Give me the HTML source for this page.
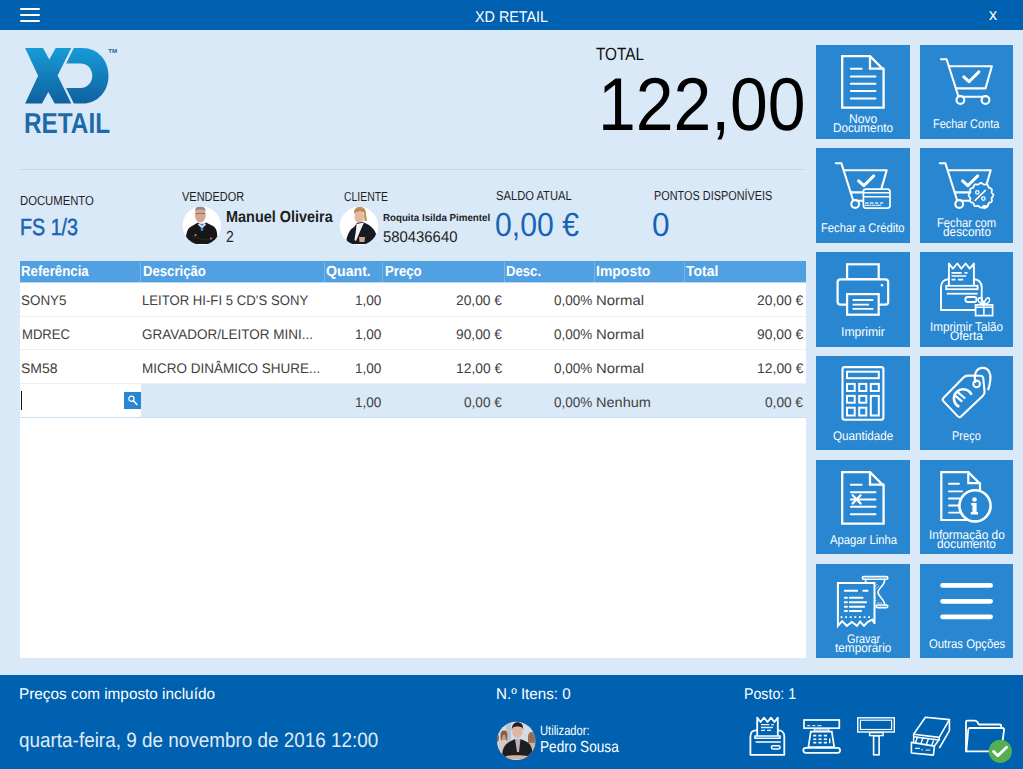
<!DOCTYPE html>
<html><head><meta charset="utf-8">
<style>
*{margin:0;padding:0;box-sizing:border-box}
html,body{width:1023px;height:769px;overflow:hidden;background:#DAE9F7;font-family:"Liberation Sans",sans-serif;color:#1b1b1b;position:relative}
.a{position:absolute}
.t{position:absolute;white-space:nowrap;line-height:1;transform-origin:0 0;text-rendering:geometricPrecision}
.btn{position:absolute;width:94px;height:94px;background:#2887D0}
.btn svg{position:absolute;left:0;top:0;overflow:visible}
.ic{fill:none;stroke:#fff;stroke-width:2.1;stroke-linecap:round;stroke-linejoin:round}
</style></head><body>
<div class="a" style="left:0;top:0;width:1023px;height:30px;background:#0061B0"></div>
<div class="a" style="left:20px;top:8px;width:20px;height:2px;background:#fff;border-radius:1px"></div>
<div class="a" style="left:20px;top:14px;width:20px;height:2px;background:#fff;border-radius:1px"></div>
<div class="a" style="left:20px;top:20px;width:20px;height:2px;background:#fff;border-radius:1px"></div>

<svg class="a" style="left:0;top:0" width="130" height="110" viewBox="0 0 130 110">
<defs><linearGradient id="lg" x1="0" y1="48" x2="0" y2="104" gradientUnits="userSpaceOnUse"><stop offset="0" stop-color="#179BD7"/><stop offset="1" stop-color="#10609E"/></linearGradient></defs>
<path d="M25.1 48.1 L43 48.1 L49.3 59.6 L55.7 48.1 L71.3 48.1 L57.6 75.5 L71.3 103.6 L54.7 103.6 L48.3 91.9 L42 103.6 L25.1 103.6 L38.1 75.7 Z" fill="url(#lg)"/>
<path d="M73.8 48.1 H82.6 C97.5 48.1 108.5 60 108.5 75.8 C108.5 91.5 97.5 103.6 82.6 103.6 H73.8 L66.2 88 H80.6 C87.5 88 92.3 82.5 92.3 75.8 C92.3 69 87.5 63.5 80.6 63.5 H66.2 Z" fill="url(#lg)"/>
<text x="108.3" y="53" font-size="6.2" font-family="Liberation Sans" font-weight="bold" fill="#2A5F8E">TM</text>
</svg>

<div class="a" style="left:20px;top:169px;width:786px;height:1px;background:#C8D9E8"></div>

<div class="a" style="left:20px;top:282px;width:786px;height:376px;background:#fff"></div>
<div class="a" style="left:20px;top:261px;width:786px;height:21px;background:#51A0E2"></div>
<div class="a" style="left:140px;top:262px;width:1px;height:20px;background:#76B4EA"></div>
<div class="a" style="left:324px;top:262px;width:1px;height:20px;background:#76B4EA"></div>
<div class="a" style="left:382px;top:262px;width:1px;height:20px;background:#76B4EA"></div>
<div class="a" style="left:504px;top:262px;width:1px;height:20px;background:#76B4EA"></div>
<div class="a" style="left:594px;top:262px;width:1px;height:20px;background:#76B4EA"></div>
<div class="a" style="left:684px;top:262px;width:1px;height:20px;background:#76B4EA"></div>
<div class="a" style="left:20px;top:282px;width:786px;height:1px;background:#B5D7F3"></div>
<div class="a" style="left:20px;top:316px;width:786px;height:1px;background:#EDF0F3"></div>
<div class="a" style="left:20px;top:349px;width:786px;height:1px;background:#EDF0F3"></div>
<div class="a" style="left:20px;top:383px;width:786px;height:1px;background:#EDF0F3"></div>
<div class="a" style="left:141px;top:384px;width:665px;height:33px;background:#DAE9F7"></div>
<div class="a" style="left:20px;top:417px;width:786px;height:1px;background:#CADFF1"></div>
<div class="a" style="left:21px;top:391px;width:1px;height:19px;background:#111"></div>
<div class="a" style="left:124px;top:392px;width:17px;height:17px;background:#2887D0"></div>
<svg class="a" style="left:124px;top:392px" width="17" height="17" viewBox="0 0 17 17"><circle cx="7.4" cy="6.7" r="2.6" fill="none" stroke="#fff" stroke-width="1.2"/><path d="M9.2 8.6 L12.9 12.4" stroke="#fff" stroke-width="1.5" stroke-linecap="round"/></svg>

<div class="btn" style="left:816px;top:45px;width:94px;height:94px"></div><svg class="a" style="left:816px;top:44px;overflow:visible" width="94" height="94" viewBox="0 0 94 94"><path class="ic" d="M26.2 12.2 H54 L67.6 25.8 V63.6 H26.2 Z" style="stroke-width:2.3;stroke-linejoin:miter"/><path class="ic" d="M54 12.2 V24.6 H67.6" style="stroke-width:2.3;stroke-linejoin:miter"/><path class="ic" d="M34.8 24.8 H45.6 M34.8 32.4 H59.5 M34.8 39.7 H59.5 M34.8 47 H59.5 M34.8 54.4 H59.5" style="stroke-width:2"/></svg>
<div class="btn" style="left:920px;top:45px;width:93px;height:94px"></div><svg class="a" style="left:920px;top:44px;overflow:visible" width="94" height="94" viewBox="0 0 94 94"><path class="ic" d="M21 15.3 H26.6 L38.5 52.8 H64.1"/>
<path class="ic" d="M29 22.3 H71.9 L65.5 44.4 H36"/>
<path class="ic" d="M43.8 32.8 L49 37.7 L58.9 27.9" style="stroke-width:3"/>
<circle class="ic" cx="40.4" cy="56" r="3.9" style="fill:#2887D0"/>
<circle class="ic" cx="65.5" cy="56" r="3.9" style="fill:#2887D0"/></svg>
<div class="btn" style="left:816px;top:148px;width:94px;height:95px"></div><svg class="a" style="left:816px;top:148px;overflow:visible" width="94" height="94" viewBox="0 0 94 94"><g transform="translate(-1.2 0)"><path class="ic" d="M21 15.3 H26.6 L38.5 52.8 H64.1"/>
<path class="ic" d="M29 22.3 H71.9 L65.5 44.4 H36"/>
<path class="ic" d="M43.8 32.8 L49 37.7 L58.9 27.9" style="stroke-width:3"/>
<circle class="ic" cx="40.4" cy="56" r="3.9" style="fill:#2887D0"/>
<circle class="ic" cx="65.5" cy="56" r="3.9" style="fill:#2887D0"/></g><rect x="47.4" y="41.1" width="26.6" height="19" rx="2.5" fill="#2887D0" stroke="#fff" stroke-width="1.7"/>
<path d="M47.4 44.8 H74 M47.4 48.7 H74" stroke="#fff" stroke-width="1.5"/>
<path d="M49.2 55 H52.7 M54 55 H57.6 M59 55 H62.3 M64 55 H67.2" stroke="#fff" stroke-width="1.5" opacity="0.8"/>
<path d="M49.2 57.3 H54.8 M56.2 57.3 H58.7 M60 57.3 H64.8" stroke="#fff" stroke-width="1.1" stroke-linecap="round"/></svg>
<div class="btn" style="left:920px;top:148px;width:93px;height:95px"></div><svg class="a" style="left:920px;top:148px;overflow:visible" width="94" height="94" viewBox="0 0 94 94"><g transform="translate(-1.2 0)"><path class="ic" d="M21 15.3 H26.6 L38.5 52.8 H64.1"/>
<path class="ic" d="M29 22.3 H71.9 L65.5 44.4 H36"/>
<path class="ic" d="M43.8 32.8 L49 37.7 L58.9 27.9" style="stroke-width:3"/>
<circle class="ic" cx="40.4" cy="56" r="3.9" style="fill:#2887D0"/>
<circle class="ic" cx="65.5" cy="56" r="3.9" style="fill:#2887D0"/></g><path d="M73.35 47.30 L73.31 47.62 L73.21 47.94 L73.04 48.25 L72.84 48.54 L72.60 48.83 L72.36 49.10 L72.13 49.36 L71.93 49.62 L71.78 49.89 L71.67 50.16 L71.63 50.45 L71.63 50.75 L71.67 51.08 L71.74 51.42 L71.81 51.78 L71.87 52.14 L71.91 52.50 L71.89 52.85 L71.83 53.18 L71.70 53.47 L71.50 53.74 L71.25 53.96 L70.96 54.14 L70.63 54.30 L70.28 54.42 L69.94 54.54 L69.61 54.65 L69.30 54.78 L69.04 54.93 L68.81 55.11 L68.63 55.34 L68.48 55.60 L68.35 55.91 L68.24 56.24 L68.12 56.58 L68.00 56.93 L67.84 57.26 L67.66 57.55 L67.44 57.80 L67.17 58.00 L66.88 58.13 L66.55 58.19 L66.20 58.21 L65.84 58.17 L65.48 58.11 L65.12 58.04 L64.78 57.97 L64.45 57.93 L64.15 57.93 L63.86 57.97 L63.59 58.08 L63.32 58.23 L63.06 58.43 L62.80 58.66 L62.53 58.90 L62.24 59.14 L61.95 59.34 L61.64 59.51 L61.32 59.61 L61.00 59.65 L60.68 59.61 L60.36 59.51 L60.05 59.34 L59.76 59.14 L59.47 58.90 L59.20 58.66 L58.94 58.43 L58.68 58.23 L58.41 58.08 L58.14 57.97 L57.85 57.93 L57.55 57.93 L57.22 57.97 L56.88 58.04 L56.52 58.11 L56.16 58.17 L55.80 58.21 L55.45 58.19 L55.12 58.13 L54.83 58.00 L54.56 57.80 L54.34 57.55 L54.16 57.26 L54.00 56.93 L53.88 56.58 L53.76 56.24 L53.65 55.91 L53.52 55.60 L53.37 55.34 L53.19 55.11 L52.96 54.93 L52.70 54.78 L52.39 54.65 L52.06 54.54 L51.72 54.42 L51.37 54.30 L51.04 54.14 L50.75 53.96 L50.50 53.74 L50.30 53.47 L50.17 53.18 L50.11 52.85 L50.09 52.50 L50.13 52.14 L50.19 51.78 L50.26 51.42 L50.33 51.08 L50.37 50.75 L50.37 50.45 L50.33 50.16 L50.22 49.89 L50.07 49.62 L49.87 49.36 L49.64 49.10 L49.40 48.83 L49.16 48.54 L48.96 48.25 L48.79 47.94 L48.69 47.62 L48.65 47.30 L48.69 46.98 L48.79 46.66 L48.96 46.35 L49.16 46.06 L49.40 45.77 L49.64 45.50 L49.87 45.24 L50.07 44.98 L50.22 44.71 L50.33 44.44 L50.37 44.15 L50.37 43.85 L50.33 43.52 L50.26 43.18 L50.19 42.82 L50.13 42.46 L50.09 42.10 L50.11 41.75 L50.17 41.42 L50.30 41.12 L50.50 40.86 L50.75 40.64 L51.04 40.46 L51.37 40.30 L51.72 40.18 L52.06 40.06 L52.39 39.95 L52.70 39.82 L52.96 39.67 L53.19 39.49 L53.37 39.26 L53.52 39.00 L53.65 38.69 L53.76 38.36 L53.88 38.02 L54.00 37.67 L54.16 37.34 L54.34 37.05 L54.56 36.80 L54.82 36.60 L55.12 36.47 L55.45 36.41 L55.80 36.39 L56.16 36.43 L56.52 36.49 L56.88 36.56 L57.22 36.63 L57.55 36.67 L57.85 36.67 L58.14 36.63 L58.41 36.52 L58.68 36.37 L58.94 36.17 L59.20 35.94 L59.47 35.70 L59.76 35.46 L60.05 35.26 L60.36 35.09 L60.68 34.99 L61.00 34.95 L61.32 34.99 L61.64 35.09 L61.95 35.26 L62.24 35.46 L62.53 35.70 L62.80 35.94 L63.06 36.17 L63.32 36.37 L63.59 36.52 L63.86 36.63 L64.15 36.67 L64.45 36.67 L64.78 36.63 L65.12 36.56 L65.48 36.49 L65.84 36.43 L66.20 36.39 L66.55 36.41 L66.88 36.47 L67.17 36.60 L67.44 36.80 L67.66 37.05 L67.84 37.34 L68.00 37.67 L68.12 38.02 L68.24 38.36 L68.35 38.69 L68.48 39.00 L68.63 39.26 L68.81 39.49 L69.04 39.67 L69.30 39.82 L69.61 39.95 L69.94 40.06 L70.28 40.18 L70.63 40.30 L70.96 40.46 L71.25 40.64 L71.50 40.86 L71.70 41.12 L71.83 41.42 L71.89 41.75 L71.91 42.10 L71.87 42.46 L71.81 42.82 L71.74 43.18 L71.67 43.52 L71.63 43.85 L71.63 44.15 L71.67 44.44 L71.78 44.71 L71.93 44.98 L72.13 45.24 L72.36 45.50 L72.60 45.77 L72.84 46.06 L73.04 46.35 L73.21 46.66 L73.31 46.98 Z" fill="#2887D0" stroke="#fff" stroke-width="1.8"/><circle cx="57.3" cy="44.4" r="1.7" fill="none" stroke="#fff" stroke-width="1.3"/><circle cx="63.4" cy="50.6" r="1.7" fill="none" stroke="#fff" stroke-width="1.3"/><path d="M65.4 42.4 L55.2 52.4" stroke="#fff" stroke-width="1.5" stroke-linecap="round"/></svg>
<div class="btn" style="left:816px;top:252px;width:94px;height:95px"></div><svg class="a" style="left:816px;top:252px;overflow:visible" width="94" height="94" viewBox="0 0 94 94"><rect class="ic" x="31.1" y="12.3" width="31.6" height="15" style="stroke-width:2.2;stroke-linejoin:miter"/>
<rect class="ic" x="21.6" y="27.4" width="50.6" height="25.3" rx="3" style="stroke-width:2.2;fill:#2887D0"/>
<circle cx="66" cy="33.3" r="1.3" fill="#fff"/>
<rect class="ic" x="31.1" y="42.1" width="31.6" height="20.6" style="stroke-width:2.2;fill:#2887D0;stroke-linejoin:miter"/>
<path class="ic" d="M36.6 48 H57.3 M36.6 52.6 H53 M36.6 56.8 H57.3" style="stroke-width:1.8;stroke-linecap:butt"/></svg>
<div class="btn" style="left:920px;top:252px;width:93px;height:95px"></div><svg class="a" style="left:920px;top:252px;overflow:visible" width="94" height="94" viewBox="0 0 94 94"><path class="ic" d="M21 58 V35 C21 30.5 24 27.3 28.9 27.3 M53.7 27.3 C58.5 27.3 61.7 30.5 61.7 35 V58 H21" style="stroke-width:1.9"/>
<path class="ic" d="M28.9 33.5 V11.5 L32.9 16.6 L37.3 11.5 L41.3 16.6 L45.7 11.5 L49.7 16.6 L53.9 11.5 V33.5" style="stroke-width:1.9;fill:#2887D0"/>
<path class="ic" d="M31.5 20.9 H41.7 M44.5 20.9 H47.5 M31.5 24 H46.2 M31.5 27.7 H35.5 M38 27.7 H43.2" style="stroke-width:1.7;stroke-linecap:butt"/>
<rect class="ic" x="26.2" y="33.8" width="31.4" height="3.4" style="stroke-width:1.8;fill:#2887D0;stroke-linejoin:miter"/>
<path class="ic" d="M26.8 41.7 H57.6" style="stroke-width:1.8;stroke-linecap:butt"/>
<rect class="ic" x="45.3" y="45" width="11.3" height="5" rx="2.5" style="stroke-width:1.8"/>
<rect class="ic" x="55.6" y="52.9" width="17" height="10.7" style="stroke-width:1.7;fill:#2887D0;stroke-linejoin:miter"/>
<path class="ic" d="M55.6 55.2 H72.6 M63.9 52.9 V63.6" style="stroke-width:1.5"/>
<path class="ic" d="M63.9 52.5 C60 52 57 49 58.5 46.5 C60 44.5 63 47 63.9 52.5 C64.8 47 67.8 44.5 69.3 46.5 C70.8 49 67.8 52 63.9 52.5" style="stroke-width:1.6;fill:none"/></svg>
<div class="btn" style="left:816px;top:356px;width:94px;height:94px"></div><svg class="a" style="left:816px;top:356px;overflow:visible" width="94" height="94" viewBox="0 0 94 94"><rect class="ic" x="26.5" y="11.1" width="40.9" height="52.6" rx="2.2" style="stroke-width:2.1"/><rect class="ic" x="31" y="15.7" width="31.8" height="6.5" style="stroke-width:2;stroke-linejoin:miter"/><rect class="ic" x="31.0" y="27.9" width="7.7" height="7.1" style="stroke-width:2;stroke-linejoin:miter"/><rect class="ic" x="31.0" y="39.9" width="7.7" height="6.8" style="stroke-width:2;stroke-linejoin:miter"/><rect class="ic" x="31.0" y="51.7" width="7.7" height="7.8" style="stroke-width:2;stroke-linejoin:miter"/><rect class="ic" x="43.2" y="27.9" width="7.1" height="7.1" style="stroke-width:2;stroke-linejoin:miter"/><rect class="ic" x="43.2" y="39.9" width="7.1" height="6.8" style="stroke-width:2;stroke-linejoin:miter"/><rect class="ic" x="43.2" y="51.7" width="7.1" height="7.8" style="stroke-width:2;stroke-linejoin:miter"/><rect class="ic" x="54.8" y="27.9" width="8.0" height="7.1" style="stroke-width:2;stroke-linejoin:miter"/><rect class="ic" x="54.8" y="39.9" width="8.0" height="19.6" style="stroke-width:2;stroke-linejoin:miter"/></svg>
<div class="btn" style="left:920px;top:356px;width:93px;height:94px"></div><svg class="a" style="left:920px;top:356px;overflow:visible" width="94" height="94" viewBox="0 0 94 94"><path class="ic" d="M23.59 45.38 Q21.80 43.50 23.62 41.65 L43.48 21.45 Q45.30 19.60 47.90 19.63 L60.40 19.77 Q63.00 19.80 63.26 22.39 L64.54 35.41 Q64.80 38.00 62.91 39.79 L41.29 60.21 Q39.40 62.00 37.61 60.12 Z" style="stroke-width:2.1"/><circle class="ic" cx="56.6" cy="27.9" r="3.3" style="stroke-width:2"/><path class="ic" d="M55.5 26 C53 17 57.5 11.8 62.8 11.9 C68.5 12 71.2 17.5 70.4 23.5 C70 27.5 69.3 30.5 68.3 33.3" style="stroke-width:2.2;fill:none"/><path d="M51.6 38.8 A9.2 9.2 0 1 0 39.3 50.8" fill="none" stroke="#fff" stroke-width="2.6" stroke-linecap="butt"/><path d="M36.4 35.1 L45.2 42.5 M33.8 38.4 L42.2 45.6" stroke="#fff" stroke-width="2.2"/></svg>
<div class="btn" style="left:816px;top:460px;width:94px;height:94px"></div><svg class="a" style="left:816px;top:460px;overflow:visible" width="94" height="94" viewBox="0 0 94 94"><path class="ic" d="M26.2 12.2 H54 L67.6 25.8 V63.6 H26.2 Z" style="stroke-width:2.3;stroke-linejoin:miter"/><path class="ic" d="M54 12.2 V24.6 H67.6" style="stroke-width:2.3;stroke-linejoin:miter"/><path class="ic" d="M34.8 24.8 H45.6 M34.8 32.2 H59.5 M34.8 39.5 H59.5 M34.8 46.8 H59.5 M34.8 54.2 H59.5" style="stroke-width:2"/><path class="ic" d="M36.6 35.3 L44.6 43.5 M44.6 35.3 L36.6 43.5" style="stroke-width:2.3"/></svg>
<div class="btn" style="left:920px;top:460px;width:93px;height:94px"></div><svg class="a" style="left:920px;top:460px;overflow:visible" width="94" height="94" viewBox="0 0 94 94"><path class="ic" d="M21.3 12.1 H48.3 L60 23.8 V60 H21.3 Z" style="stroke-width:2.2;stroke-linejoin:miter"/>
<path class="ic" d="M48.3 12.1 V23.2 H60" style="stroke-width:2.2;stroke-linejoin:miter"/>
<path class="ic" d="M29 23.8 H39 M29 31.4 H42 M29 38.5 H42 M29 45.5 H42 M29 52.6 H42" style="stroke-width:1.9"/>
<circle class="ic" cx="55" cy="45.8" r="15.6" style="stroke-width:2.6;fill:#2887D0"/>
<circle cx="54.5" cy="39.5" r="2.3" fill="#fff"/>
<path d="M51.2 43.1 H56.6 V52.1 H58 V54.4 H50.8 V52.1 H52.4 V45.3 H51.2 Z" fill="#fff"/></svg>
<div class="btn" style="left:816px;top:564px;width:94px;height:94px"></div><svg class="a" style="left:816px;top:564px;overflow:visible" width="94" height="94" viewBox="0 0 94 94"><rect class="ic" x="46.4" y="12.6" width="25.4" height="2.6" rx="1.3" style="stroke-width:1.6"/>
<rect class="ic" x="60.1" y="41" width="11.7" height="2.6" rx="1.3" style="stroke-width:1.6"/>
<path class="ic" d="M68.7 15.4 C68.7 22 62 24 62 28.3 C62 33 68.7 35 68.7 41" style="stroke-width:1.6"/>
<path class="ic" d="M49.6 15.4 V19.5" style="stroke-width:1.6"/>
<path d="M59.5 22 L61.5 20 M60.5 24.5 L63 22 M59.5 33 V34 M60 36 V37 M61 39 H66 " stroke="#fff" stroke-width="0.9" opacity="0.7"/>
<path class="ic" d="M21.9 61.5 V18.9 H58.5 V60 L58.5 59.1 L56.2 55.6 L51.9 57.9 L48.0 61.8 L44.1 57.5 L41.0 61.8 L35.9 57.9 L30.8 61.8 L26.1 57.1 L21.9 61.8 Z" style="stroke-width:2;fill:#2887D0;stroke-linejoin:miter"/>
<path class="ic" d="M28.8 26.7 H41.2 M47.3 26.7 H51.6 M28.8 33.7 H31 M33.8 33.7 H46.6 M28.8 38.3 H31 M33.8 38.3 H50.1 M28.8 42.7 H31 M33.8 42.7 H48.2 M28.8 47 H31 M33.8 47 H45.1" style="stroke-width:1.9"/>
<path d="M24.6 53.1 H56.6" stroke="#fff" stroke-width="1.9" stroke-dasharray="1.8 2.8"/></svg>
<div class="btn" style="left:920px;top:564px;width:93px;height:94px"></div><svg class="a" style="left:920px;top:564px;overflow:visible" width="94" height="94" viewBox="0 0 94 94"><path class="ic" d="M22.6 21.4 H70.6 M22.6 37.3 H70.6 M22.6 52.8 H70.6" style="stroke-width:4.8"/></svg>

<div class="a" style="left:0;top:675px;width:1023px;height:94px;background:#0061B0"></div>
<svg class="a" style="left:0;top:0;overflow:visible" width="1023" height="769" viewBox="0 0 1023 769">
<g fill="none" stroke="#fff" stroke-width="1.8" stroke-linecap="round" stroke-linejoin="round">
<path d="M750.4 754.8 V736.5 C750.4 732.8 752.6 730.4 756.2 730.4 M778.5 730.4 C782 730.4 784.3 732.8 784.3 736.5 V754.8 H750.4"/>
<path d="M757.2 735.5 V717.6 L760.6 722 L764 717.6 L767.5 722 L771 717.6 L774.4 722 L777.8 717.6 V735.5" fill="#0061B0"/>
<path d="M761 724.6 H769.3 M771.3 724.6 H774 M761 727.5 H773 M761 730.3 H765 M767 730.3 H771" stroke-width="1.3" stroke-linecap="butt" opacity="0.9"/>
<rect x="754.9" y="735.9" width="25.2" height="2.4" fill="#0061B0" stroke-width="1.5"/>
<path d="M755.6 742 H780.8" stroke-width="1.5" stroke-linecap="butt"/>
<rect x="771.4" y="745.7" width="8.7" height="3.3" rx="1.65" stroke-width="1.5"/>

<rect x="804" y="720" width="35.3" height="8.2" stroke-width="1.7" stroke-linejoin="miter"/>
<path d="M807.2 725.6 H810.2 M812.3 725.6 H815.3 M817.3 725.6 H821.5" stroke-width="1.1" opacity="0.8" stroke-linecap="butt"/>
<rect x="814.3" y="729" width="14.5" height="2.2" stroke-width="1.2"/>
<path d="M810.8 731.6 H831.8 L834.2 747.2 H808.4 Z" stroke-width="1.7" stroke-linejoin="miter"/>
<path d="M813.2 735.6 H816.3 M818.4 735.6 H821.6 M823.8 735.6 H827 M813.2 739.2 H816.3 M818.4 739.2 H821.6 M823.8 739.2 H827 M813.2 742.6 H816.3 M818.4 742.6 H821.6 M823.8 742.6 H827" stroke-width="1.6" stroke-linecap="butt"/>
<path d="M829.7 738.3 V743.2" stroke-width="1.4" stroke-linecap="butt"/>
<rect x="803.3" y="747.8" width="36.8" height="5" rx="2.5" stroke-width="1.7" fill="#0061B0"/>

<rect x="857.8" y="717.8" width="36.5" height="14.2" stroke-width="1.4" stroke-linejoin="miter"/>
<rect x="860.4" y="720.2" width="31.2" height="9.3" stroke-width="1.2" stroke-linejoin="miter"/>
<rect x="869.6" y="732.6" width="13.5" height="3" stroke-width="1.4" stroke-linejoin="miter"/>
<rect x="873.6" y="735.8" width="5.5" height="19" stroke-width="1.6" stroke-linejoin="miter"/>

<path d="M913.6 734.3 L925.4 717.2 L949.4 719.6 L939.2 737.4 Z" stroke-width="1.6"/>
<path d="M949.4 719.6 V730.6 L939.7 747.5" stroke-width="1.6"/>
<path d="M913.6 734.3 V742.6 M913.6 736.8 L938.6 740 M917.5 737 L915.5 742.5 M923 737.8 L921 743.2 M928.5 738.5 L926.5 744 M934 739.2 L932 744.8 M939.2 737.4 V740" stroke-width="1.4"/>
<path d="M911.4 742.4 L934.4 746.1 L933.4 755.1 L911.4 753 Z" stroke-width="1.6" fill="#0061B0"/>
<path d="M934.4 746.1 L938.7 740" stroke-width="1.6"/>
<path d="M915.5 748.4 H919.5 M922 749.3 V750 M926 750 H930" stroke-width="1.2" opacity="0.9"/>

<path d="M966 751.4 V722 C966 721.1 966.6 720.6 967.5 720.6 H975 C976 720.6 976.6 721 977.2 721.8 L978.8 724.5 H999.5 C1000.6 724.5 1001.2 725.1 1001.2 726 V727.8"/>
<path d="M966.3 751.2 L968.3 729.5 C968.4 728.6 969 728 970 728 H1002.5 C1003.5 728 1004.2 728.7 1004.1 729.6 L1002.6 741 M966.3 751.3 H990"/>
</g>
<circle cx="1000.3" cy="751.3" r="11.6" fill="#55AF51"/>
<path d="M993.6 751.6 L997.8 755.8 L1006.6 747.2" fill="none" stroke="#fff" stroke-width="2.8" stroke-linecap="round" stroke-linejoin="round"/>
</svg>

<svg class="a" style="left:180px;top:204px" width="44" height="44" viewBox="0 0 44 44">
<defs><clipPath id="c1"><circle cx="21.7" cy="21.7" r="19.2"/></clipPath></defs>
<circle cx="21.7" cy="21.7" r="19.2" fill="#fff"/>
<g clip-path="url(#c1)">
<ellipse cx="20.3" cy="11" rx="5.4" ry="7.4" fill="#D8A58F"/>
<path d="M14.8 8 C15 3 18 2.6 20.5 2.6 C23 2.6 25.8 3.5 25.8 8 L25 6.5 C23 5 18 5 15.5 6.5 Z" fill="#8E8A86"/>
<path d="M15.5 9.5 H25" stroke="#7a6a66" stroke-width="0.8"/>
<path d="M6 40 C5.5 30 7 24 12 22 L18 18.5 L22 21 L26 18.5 L33 22 C37 24 38 30 37 40 Z" fill="#171717"/>
<path d="M20 20 L22 19.5 L24 20 L23 27 L21 27 Z" fill="#3E86CF"/>
<path d="M19 19 L22 22 L25 19 L26 21 L22 24 L18 21 Z" fill="#D9E3EE"/>
<path d="M12 32 C16 33 20 35 24 36 L31 35" stroke="#2a2a2a" stroke-width="1" fill="none"/>
<circle cx="15.5" cy="31" r="1" fill="#C8927E"/>
<circle cx="31" cy="34.5" r="1" fill="#C8927E"/>
</g>
</svg>
<svg class="a" style="left:337px;top:204px" width="44" height="44" viewBox="0 0 44 44">
<defs><clipPath id="c2"><circle cx="22" cy="22" r="19.2"/></clipPath></defs>
<circle cx="22" cy="22" r="19.2" fill="#fff"/>
<g clip-path="url(#c2)">
<path d="M17 9 C17 4 20 3 23 3 C27 3 29 5.5 29 10 L30 17 L27.5 17 L27 9 C24 7 20 7 18 10 Z" fill="#C48F55"/>
<ellipse cx="22.3" cy="13" rx="4.8" ry="6.3" fill="#E5B9A0"/>
<path d="M18 8.5 C19 5 25 4.5 27.5 8 C25 6.5 21 6.5 18 8.5 Z" fill="#B8844E"/>
<path d="M20 19 L26 18 L30 20 C34 22 38 26 39 30 L37 40 L10 40 L9.5 35 C11 30 13 25 17 23 Z" fill="#171A22"/>
<path d="M19.5 20 L27 18.5 L24.5 24 L19 37 L17.5 36 L19 26 Z" fill="#F4F4F4"/>
<path d="M22 33 L28 33 L27.5 38 L22.5 38 Z" fill="#D9A089"/>
</g>
</svg>
<svg class="a" style="left:494px;top:719px" width="44" height="44" viewBox="0 0 44 44">
<defs><clipPath id="c3"><circle cx="22.2" cy="21.9" r="19.2"/></clipPath></defs>
<circle cx="22.2" cy="21.9" r="19.2" fill="#D3DDE3"/>
<g clip-path="url(#c3)">
<rect x="12" y="0" width="5" height="25" fill="#B9C6CE"/>
<ellipse cx="10" cy="17.5" rx="3" ry="4" fill="#C99A80"/>
<path d="M6.5 17 C6.5 12 8 11.5 10 11.5 C12 11.5 13.5 12 13.5 17 L13 23 L11 16 L9 16 L7 23 Z" fill="#8A5E44"/>
<path d="M5 22 L15 22 L15 40 L3 40 Z" fill="#D8C7C0"/>
<ellipse cx="37.5" cy="19" rx="3" ry="3.8" fill="#D3A284"/>
<path d="M34 18 C34 14 36 13 37.5 13 C39.5 13 41 14 41 18 L41 24 L34 24 Z" fill="#8A5E44" opacity="0.8"/>
<path d="M33 24 L42 24 L42 40 L33 40 Z" fill="#C9B8B0"/>
<ellipse cx="2.5" cy="19" rx="2.5" ry="4" fill="#8A5E44"/>
<ellipse cx="23.5" cy="12.5" rx="5.2" ry="6.5" fill="#E0B6A2"/>
<path d="M17.8 11 C17.8 5 20.5 3.2 23.5 3.2 C27 3.2 29.5 5 29.2 11 L28.3 8.5 C26 7 21 7 18.8 8.5 Z" fill="#2A1E18"/>
<path d="M8 40 C8 30 10 25 17 22 L21 20 L23.5 24 L26.5 20 L31 22 C37 24 39 30 39 40 Z" fill="#1E1E22"/>
<path d="M21 20 L26.5 20 L25 33 L23 33 Z" fill="#B9B2B4"/>
<path d="M12 37 C18 36 28 36 34 37 L34 40 L12 40 Z" fill="#D8B19E"/>
</g>
</svg>

<div class="t" style="left:474.95px;top:10px;font-size:15.57px;color:#ffffff;transform:scaleX(0.9219)">XD RETAIL</div>
<div class="t" style="left:989.15px;top:7px;font-size:16.53px;color:#ffffff;transform:scaleX(0.9736)">x</div>
<div class="t" style="left:23.64px;top:110px;font-size:28.90px;color:#1C6AA9;font-weight:bold;transform:scaleX(0.8421)">RETAIL</div>
<div class="t" style="left:596.22px;top:46px;font-size:17.65px;color:#111111;transform:scaleX(0.8679)">TOTAL</div>
<div class="t" style="left:598.42px;top:67px;font-size:75.03px;color:#000000;transform:scaleX(0.9049)">122,00</div>
<div class="t" style="left:20.21px;top:194px;font-size:13.08px;color:#1e1e1e;transform:scaleX(0.8639)">DOCUMENTO</div>
<div class="t" style="left:182.40px;top:190px;font-size:13.08px;color:#1e1e1e;transform:scaleX(0.8395)">VENDEDOR</div>
<div class="t" style="left:344.43px;top:190px;font-size:13.08px;color:#1e1e1e;transform:scaleX(0.7962)">CLIENTE</div>
<div class="t" style="left:495.87px;top:189px;font-size:13.08px;color:#1e1e1e;transform:scaleX(0.8559)">SALDO ATUAL</div>
<div class="t" style="left:653.94px;top:189px;font-size:13.08px;color:#1e1e1e;transform:scaleX(0.8320)">PONTOS DISPONÍVEIS</div>
<div class="t" style="left:20.34px;top:216px;font-size:23.45px;color:#1664B4;transform:scaleX(0.8401);-webkit-text-stroke:0.5px #1664B4">FS 1/3</div>
<div class="t" style="left:225.67px;top:210px;font-size:15.99px;color:#1e1e1e;font-weight:bold;transform:scaleX(0.9036)">Manuel Oliveira</div>
<div class="t" style="left:225.83px;top:230px;font-size:15.99px;color:#1e1e1e;transform:scaleX(0.8728)">2</div>
<div class="t" style="left:382.95px;top:214px;font-size:10.17px;color:#1e1e1e;font-weight:bold;transform:scaleX(0.9587)">Roquita Isilda Pimentel</div>
<div class="t" style="left:383.07px;top:230px;font-size:15.57px;color:#1e1e1e;transform:scaleX(0.9553)">580436640</div>
<div class="t" style="left:494.61px;top:209px;font-size:33.43px;color:#1664B4;transform:scaleX(0.9031)">0,00 €</div>
<div class="t" style="left:651.57px;top:209px;font-size:33.43px;color:#1664B4;transform:scaleX(0.9463)">0</div>
<div class="t" style="left:21.10px;top:265px;font-size:14.73px;color:#ffffff;font-weight:bold;transform:scaleX(0.8994)">Referência</div>
<div class="t" style="left:142.81px;top:265px;font-size:14.73px;color:#ffffff;font-weight:bold;transform:scaleX(0.8927)">Descrição</div>
<div class="t" style="left:326.16px;top:265px;font-size:14.73px;color:#ffffff;font-weight:bold;transform:scaleX(0.9604)">Quant.</div>
<div class="t" style="left:385.21px;top:265px;font-size:14.73px;color:#ffffff;font-weight:bold;transform:scaleX(0.8967)">Preço</div>
<div class="t" style="left:506.41px;top:265px;font-size:14.73px;color:#ffffff;font-weight:bold;transform:scaleX(0.8924)">Desc.</div>
<div class="t" style="left:596.16px;top:265px;font-size:14.73px;color:#ffffff;font-weight:bold;transform:scaleX(0.9494)">Imposto</div>
<div class="t" style="left:686.46px;top:265px;font-size:14.73px;color:#ffffff;font-weight:bold;transform:scaleX(0.9473)">Total</div>
<div class="t" style="left:20.96px;top:294px;font-size:13.90px;color:#414141;transform:scaleX(0.9660)">SONY5</div>
<div class="t" style="left:142.32px;top:294px;font-size:13.90px;color:#414141;transform:scaleX(0.9457)">LEITOR HI-FI 5 CD’S SONY</div>
<div class="t" style="left:355.11px;top:294px;font-size:13.90px;color:#414141;transform:scaleX(0.9770)">1,00</div>
<div class="t" style="left:456.29px;top:294px;font-size:13.90px;color:#414141;transform:scaleX(0.9913)">20,00 €</div>
<div class="t" style="left:553.92px;top:294px;font-size:13.90px;color:#414141;transform:scaleX(0.9721)">0,00%</div>
<div class="t" style="left:596.10px;top:294px;font-size:13.90px;color:#414141;transform:scaleX(1.0721)">Normal</div>
<div class="t" style="left:757.29px;top:294px;font-size:13.90px;color:#414141;transform:scaleX(0.9957)">20,00 €</div>
<div class="t" style="left:21.62px;top:328px;font-size:13.90px;color:#414141;transform:scaleX(0.9417)">MDREC</div>
<div class="t" style="left:142.29px;top:328px;font-size:13.90px;color:#414141;transform:scaleX(0.9717)">GRAVADOR/LEITOR MINI...</div>
<div class="t" style="left:355.11px;top:328px;font-size:13.90px;color:#414141;transform:scaleX(0.9770)">1,00</div>
<div class="t" style="left:456.29px;top:328px;font-size:13.90px;color:#414141;transform:scaleX(0.9912)">90,00 €</div>
<div class="t" style="left:553.92px;top:328px;font-size:13.90px;color:#414141;transform:scaleX(0.9721)">0,00%</div>
<div class="t" style="left:596.10px;top:328px;font-size:13.90px;color:#414141;transform:scaleX(1.0721)">Normal</div>
<div class="t" style="left:757.29px;top:328px;font-size:13.90px;color:#414141;transform:scaleX(0.9956)">90,00 €</div>
<div class="t" style="left:21.12px;top:362px;font-size:13.90px;color:#414141;transform:scaleX(1.0069)">SM58</div>
<div class="t" style="left:142.09px;top:362px;font-size:13.90px;color:#414141;transform:scaleX(0.9707)">MICRO DINÂMICO SHURE...</div>
<div class="t" style="left:355.11px;top:362px;font-size:13.90px;color:#414141;transform:scaleX(0.9770)">1,00</div>
<div class="t" style="left:456.09px;top:362px;font-size:13.90px;color:#414141;transform:scaleX(0.9956)">12,00 €</div>
<div class="t" style="left:553.92px;top:362px;font-size:13.90px;color:#414141;transform:scaleX(0.9721)">0,00%</div>
<div class="t" style="left:596.10px;top:362px;font-size:13.90px;color:#414141;transform:scaleX(1.0721)">Normal</div>
<div class="t" style="left:757.09px;top:362px;font-size:13.90px;color:#414141">12,00 €</div>
<div class="t" style="left:355.11px;top:396px;font-size:13.90px;color:#414141;transform:scaleX(0.9770)">1,00</div>
<div class="t" style="left:464.41px;top:396px;font-size:13.90px;color:#414141;transform:scaleX(0.9775)">0,00 €</div>
<div class="t" style="left:553.92px;top:396px;font-size:13.90px;color:#414141;transform:scaleX(0.9721)">0,00%</div>
<div class="t" style="left:596.02px;top:396px;font-size:13.90px;color:#414141;transform:scaleX(1.0451)">Nenhum</div>
<div class="t" style="left:765.41px;top:396px;font-size:13.90px;color:#414141;transform:scaleX(0.9828)">0,00 €</div>
<div class="t" style="left:849.03px;top:113px;font-size:12.67px;color:#ffffff;transform:scaleX(0.9597)">Novo</div>
<div class="t" style="left:833.26px;top:122px;font-size:12.67px;color:#ffffff;transform:scaleX(0.9257)">Documento</div>
<div class="t" style="left:933.01px;top:118px;font-size:12.67px;color:#ffffff;transform:scaleX(0.8641)">Fechar Conta</div>
<div class="t" style="left:821.29px;top:222px;font-size:12.67px;color:#ffffff;transform:scaleX(0.8857)">Fechar a Crédito</div>
<div class="t" style="left:937.19px;top:217px;font-size:12.67px;color:#ffffff;transform:scaleX(0.8860)">Fechar com</div>
<div class="t" style="left:942.64px;top:226px;font-size:12.67px;color:#ffffff;transform:scaleX(0.9335)">desconto</div>
<div class="t" style="left:841.40px;top:326px;font-size:12.67px;color:#ffffff;transform:scaleX(0.9600)">Imprimir</div>
<div class="t" style="left:930.14px;top:321px;font-size:12.67px;color:#ffffff;transform:scaleX(0.9204)">Imprimir Talão</div>
<div class="t" style="left:950.01px;top:330px;font-size:12.67px;color:#ffffff;transform:scaleX(0.9351)">Oferta</div>
<div class="t" style="left:833.12px;top:430px;font-size:12.67px;color:#ffffff;transform:scaleX(0.9192)">Quantidade</div>
<div class="t" style="left:952.21px;top:430px;font-size:12.67px;color:#ffffff;transform:scaleX(0.8696)">Preço</div>
<div class="t" style="left:829.71px;top:534px;font-size:12.67px;color:#ffffff;transform:scaleX(0.8899)">Apagar Linha</div>
<div class="t" style="left:928.92px;top:529px;font-size:12.67px;color:#ffffff;transform:scaleX(0.9360)">Informação do</div>
<div class="t" style="left:937.44px;top:538px;font-size:12.67px;color:#ffffff;transform:scaleX(0.9391)">documento</div>
<div class="t" style="left:846.61px;top:633px;font-size:12.67px;color:#ffffff;transform:scaleX(0.8587)">Gravar</div>
<div class="t" style="left:835.20px;top:642px;font-size:12.67px;color:#ffffff;transform:scaleX(0.9310)">temporário</div>
<div class="t" style="left:928.63px;top:638px;font-size:12.67px;color:#ffffff;transform:scaleX(0.8955)">Outras Opções</div>
<div class="t" style="left:19.15px;top:687px;font-size:15.57px;color:#ffffff;transform:scaleX(0.9850)">Preços com imposto incluído</div>
<div class="t" style="left:495.86px;top:687px;font-size:15.57px;color:#ffffff;transform:scaleX(0.9732)">N.º Itens: 0</div>
<div class="t" style="left:743.92px;top:687px;font-size:15.57px;color:#ffffff;transform:scaleX(0.9116)">Posto: 1</div>
<div class="t" style="left:19.14px;top:731px;font-size:20.70px;color:#ffffff;transform:scaleX(0.9135);opacity:0.88">quarta-feira, 9 de novembro de 2016 12:00</div>
<div class="t" style="left:540.15px;top:724px;font-size:13.57px;color:#ffffff;transform:scaleX(0.8220)">Utilizador:</div>
<div class="t" style="left:540.16px;top:740px;font-size:15.99px;color:#ffffff;transform:scaleX(0.8520)">Pedro Sousa</div>

</body></html>
